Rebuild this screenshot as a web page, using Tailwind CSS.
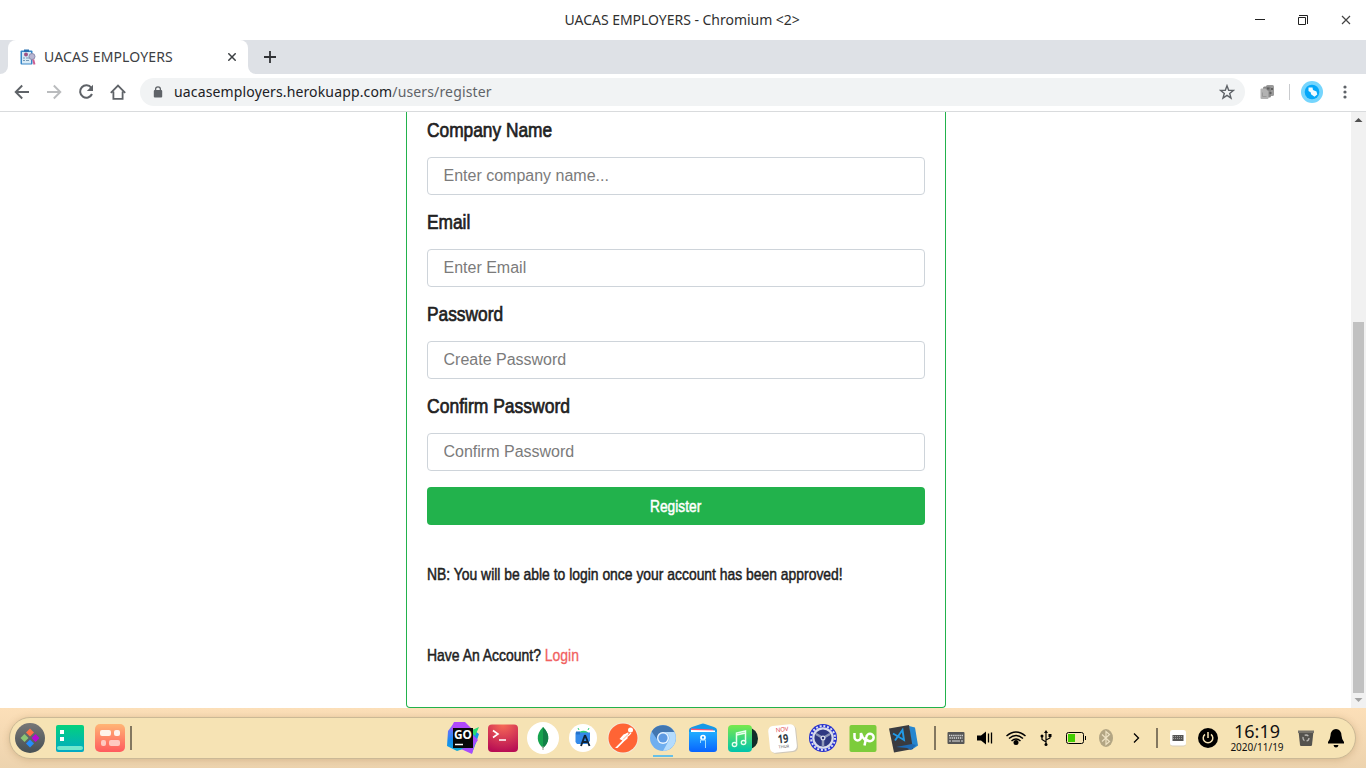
<!DOCTYPE html>
<html lang="en">
<head>
<meta charset="utf-8">
<title>UACAS EMPLOYERS</title>
<script src="https://cdn.jsdelivr.net/npm/@tailwindcss/browser@4"></script>
</head>
<body class="w-[1366px] h-[768px] overflow-hidden flex flex-col bg-white font-['Noto_Sans',sans-serif] text-[#202124]">

<!-- Window title bar -->
<header class="h-10 shrink-0 flex items-center pl-[564.5px]">
  <h1 class="flex-1 leading-10 text-[14px] tracking-[-0.03px] text-[#303030] whitespace-nowrap">UACAS EMPLOYERS - Chromium &lt;2&gt;</h1>
  <svg class="w-[43px] h-10" viewBox="0 0 43 40"><path d="M18 19.5h10" stroke="#222"/></svg>
  <svg class="w-[43px] h-10" viewBox="0 0 43 40" fill="none" stroke="#222"><path d="M18.500 17.500h7v7h-7zM19 15.500h8.500v8.500"/></svg>
  <svg class="w-[43px] h-10" viewBox="0 0 43 40"><path d="M19 16l8 8M27 16l-8 8" stroke="#444" stroke-width="1.2"/></svg>
</header>

<!-- Tab strip -->
<nav class="h-[34px] shrink-0 flex bg-[#dee1e6]">
  <div class="w-2 bg-white"><div class="h-full rounded-br-lg bg-[#dee1e6]"></div></div>
  <div class="w-[240px] flex items-center bg-white rounded-t-lg pl-3">
    <svg class="w-4 h-4 shrink-0" viewBox="0 0 16 16"><rect x=".5" y="1.500" width="12" height="14" rx="1" fill="#3987c8"/><rect x="2" y="3" width="9" height="11.500" fill="#d7eaf6"/><path d="M4 .5h5v2.300H4z" fill="#286eae"/><circle cx="6" cy="5.500" r="2" fill="#9e5384"/><path d="M3 9h2M3 11.500h2M6 9h3M6 11.500h3" stroke="#7699b6"/><circle cx="12" cy="7.500" r="3" fill="#b9b6d2" stroke="#8d8fae"/><path d="M13.200 10.500l1.300 5" stroke="#ce5f91" stroke-width="2"/></svg>
    <span class="ml-2 text-[14px] leading-5 tracking-[0.14px] text-[#3c4043] whitespace-nowrap">UACAS EMPLOYERS</span>
    <svg class="ml-auto mr-3 w-2 h-2" viewBox="0 0 8 8"><path d="M.3.3l7.400 7.400M7.700.3L.3 7.700" stroke="#3c4043" stroke-width="1.500"/></svg>
  </div>
  <div class="flex-1 bg-white"><div class="h-full rounded-bl-lg bg-[#dee1e6] flex items-center pl-4"><svg class="w-3 h-3" viewBox="0 0 12 12"><path d="M6 0v12M0 6h12" stroke="#303235" stroke-width="1.800"/></svg></div></div>
</nav>

<!-- Address toolbar -->
<section class="h-[38px] shrink-0 flex items-start pt-1 border-b border-[#d9dbdd] bg-white">
  <div class="h-7 flex items-center pl-[14px] gap-4 shrink-0">
    <svg class="w-4 h-4" viewBox="0 0 16 16" fill="none" stroke="#5f6368" stroke-width="1.9"><path d="M15 8H2M8.2 1.5L1.7 8l6.5 6.5"/></svg>
    <svg class="w-4 h-4" viewBox="0 0 16 16" fill="none" stroke="#babcbe" stroke-width="1.9"><path d="M1 8h13M7.8 1.5L14.3 8l-6.5 6.5"/></svg>
    <svg class="w-4 h-4" viewBox="0 0 16 16"><path d="M13.3 3.8A6.2 6.2 0 1 0 14 10" fill="none" stroke="#5f6368" stroke-width="2"/><path d="M15 .8V7H8.800z" fill="#5f6368"/></svg>
    <svg class="w-4 h-4" viewBox="0 0 16 16" fill="none" stroke="#5f6368" stroke-width="1.8"><path d="M.8 8.8L8 1.5l7.2 7.3M3.4 7.5v7.4h9.2V7.5"/></svg>
  </div>
  <div class="ml-[14px] w-[1105px] h-7 rounded-full bg-[#f1f3f4] flex items-center pl-[13px] pr-[10px] shrink-0">
    <svg class="w-[10px] h-3 shrink-0" viewBox="0 0 10 12"><rect x=".8" y="4" width="8.4" height="7.5" rx="1" fill="#5f6368"/><path d="M2.6 5V3.2a2.4 2.4 0 0 1 4.8 0V5" fill="none" stroke="#5f6368" stroke-width="1.3"/></svg>
    <span class="ml-[11px] text-[14px] leading-5 tracking-[0.145px] whitespace-nowrap">uacasemployers.herokuapp.com<span class="text-[#5f6368]">/users/register</span></span>
    <svg class="ml-auto w-4 h-4" viewBox="0 0 16 16"><path d="M8 1.7l1.7 4.5 4.8.2-3.8 3 1.3 4.7L8 11.4l-4 2.7 1.3-4.7-3.800-3 4.800-.2z" fill="none" stroke="#5f6368" stroke-width="1.4"/></svg>
  </div>
  <div class="h-7 flex items-center flex-1">
    <svg class="ml-[14px] w-4 h-4 shrink-0" viewBox="0 0 16 16"><rect x="7" y="1" width="8" height="11" rx="1.500" fill="#9a9a9a"/><rect x="4" y="2.500" width="8" height="11" rx="1.500" fill="#888"/><path d="M8 3.500h2.500v2H8zM12 4h2v2h-2zM10.500 8h2v2h-2z" fill="#606060"/><path d="M2.500 4.500h4l3 3V14q0 1-1 1h-6q-1 0-1-1V5.500q0-1 1-1z" fill="#b2b2b2"/><path d="M3.500 8.500v4h4" fill="none" stroke="#999"/></svg>
    <div class="ml-[14px] w-px h-4 bg-[#c9cbce]"></div>
    <svg class="ml-[11px] w-[22px] h-[22px] shrink-0" viewBox="0 0 22 22"><circle cx="11" cy="11" r="11" fill="#75d5fd"/><circle cx="11" cy="11" r="7.3" fill="#05a7f9"/><path d="M7.500 6.500h4l.5 2.500 3.500 1.500.8 3-2.800 2.200-3.500-2.500-.2-1.700L7.500 10z" fill="#f2fbff"/></svg>
    <svg class="ml-[19.5px] w-1 h-[14px]" viewBox="0 0 4 14" fill="#5f6368"><circle cx="2" cy="2" r="1.6"/><circle cx="2" cy="7" r="1.6"/><circle cx="2" cy="12" r="1.6"/></svg>
  </div>
</section>

<!-- Page -->
<main class="h-[596px] shrink-0 flex bg-white">
  <div class="w-[1351px] flex pl-[406px]">
    <form class="w-[540px] h-[596px] border border-t-0 border-[#22b24c] rounded-b px-5 flex flex-col font-['Liberation_Sans',Arial,sans-serif] text-[#212529]">
      <label class="h-[45px] pt-[3px] -ml-[0.5px]"><span class="inline-block origin-left scale-x-[.825] text-[21px] leading-[30px] whitespace-nowrap [-webkit-text-stroke:0.7px_#212121] text-[#212121]">Company Name</span></label>
      <input class="h-[38px] w-[498px] border border-[#ced4da] rounded pl-[15.5px] pr-4 text-[16px] placeholder:text-[#7b7b7b] placeholder:opacity-100" placeholder="Enter company name...">
      <label class="h-[54px] pt-[12px] -ml-[0.5px]"><span class="inline-block origin-left scale-x-[.825] text-[21px] leading-[30px] whitespace-nowrap [-webkit-text-stroke:0.7px_#212121] text-[#212121]">Email</span></label>
      <input class="h-[38px] w-[498px] border border-[#ced4da] rounded pl-[15.5px] pr-4 text-[16px] placeholder:text-[#7b7b7b] placeholder:opacity-100" placeholder="Enter Email">
      <label class="h-[54px] pt-[12px] -ml-[0.5px]"><span class="inline-block origin-left scale-x-[.825] text-[21px] leading-[30px] whitespace-nowrap [-webkit-text-stroke:0.7px_#212121] text-[#212121]">Password</span></label>
      <input class="h-[38px] w-[498px] border border-[#ced4da] rounded pl-[15.5px] pr-4 text-[16px] placeholder:text-[#7b7b7b] placeholder:opacity-100" placeholder="Create Password">
      <label class="h-[54px] pt-[12px] -ml-[0.5px]"><span class="inline-block origin-left scale-x-[.834] text-[21px] leading-[30px] whitespace-nowrap [-webkit-text-stroke:0.7px_#212121] text-[#212121]">Confirm Password</span></label>
      <input class="h-[38px] w-[498px] border border-[#ced4da] rounded pl-[15.5px] pr-4 text-[16px] placeholder:text-[#7b7b7b] placeholder:opacity-100" placeholder="Confirm Password">
      <button type="button" class="mt-4 h-[38px] w-[498px] shrink-0 rounded bg-[#22b24c] text-white text-[17px] pt-[2px]"><span class="inline-block scale-x-[.81] [-webkit-text-stroke:0.5px_#fff]">Register</span></button>
      <p class="mt-[38px] -ml-[0.5px] h-6 text-[17px] leading-6"><span class="inline-block origin-left scale-x-[.8175] whitespace-nowrap [-webkit-text-stroke:0.5px_#212121] text-[#212121]">NB: You will be able to login once your account has been approved!</span></p>
      <p class="mt-[57px] -ml-[0.5px] h-6 text-[17px] leading-6"><span class="inline-block origin-left scale-x-[.82] whitespace-nowrap [-webkit-text-stroke:0.5px_#212121] text-[#212121]">Have An Account? <a class="text-[#f1615f] [-webkit-text-stroke:0.3px_#f1615f]">Login</a></span></p>
    </form>
  </div>
  <aside class="w-[15px] bg-[#f1f1f1] flex flex-col items-center">
    <svg class="w-[15px] h-[15px]" viewBox="0 0 15 15"><path d="M3.5 10L7.5 6l4 4z" fill="#505050"/></svg>
    <div class="mt-[195px] w-[11px] h-[371px] bg-[#c1c1c1]"></div>
    <svg class="w-[15px] h-[15px]" viewBox="0 0 15 15"><path d="M3.5 5l4 4 4-4z" fill="#a3a3a3"/></svg>
  </aside>
</main>

<!-- Desktop dock -->
<footer class="flex-1 bg-linear-to-b from-[#fcdfb8] to-[#edd3ae] pt-[9px] px-[10px]">
  <div class="w-[1347px] h-[42px] rounded-full bg-[#f6e3b4] border border-[#cbb996] shadow-[0_1px_7px_rgba(150,110,60,.3)] flex items-center -ml-px">
    <svg class="w-10 h-10 shrink-0" viewBox="0 0 40 40"><defs><linearGradient id="lg" x2="0" y2="1"><stop stop-color="#777"/><stop offset="1" stop-color="#465054"/></linearGradient></defs><circle cx="20" cy="20" r="15" fill="url(#lg)"/><path d="M20 10.500l4 4-4 4-4-4z" fill="#ff7046"/><path d="M14.500 16l4 4-4 4-4-4z" fill="#8bc574"/><path d="M25.500 16l4 4-4 4-4-4z" fill="#b80bd2"/><path d="M20 21.500l4 4-4 4-4-4z" fill="#268cfa"/></svg>
    <svg class="w-10 h-10 shrink-0" viewBox="0 0 40 40"><defs><linearGradient id="gr" x2="0" y2="1"><stop stop-color="#03d27d"/><stop offset="1" stop-color="#02a9c5"/></linearGradient></defs><rect x="6" y="7" width="28" height="27" rx="2" fill="url(#gr)"/><path d="M10 12h4v4h-4zM10 19h4v4h-4z" fill="#fff"/><rect x="7" y="28" width="26" height="4" rx="2" fill="#72e7cd"/></svg>
    <svg class="w-10 h-10 shrink-0" viewBox="0 0 40 40"><defs><linearGradient id="or" x2="0" y2="1"><stop stop-color="#ffb575"/><stop offset="1" stop-color="#ff5b5e"/></linearGradient></defs><rect x="5" y="6" width="30" height="28" rx="5" fill="url(#or)"/><rect x="10" y="12" width="11" height="6" rx="2" fill="#fff3ea"/><rect x="24" y="12" width="6" height="6" rx="2" fill="#fff3ea"/><rect x="11" y="22" width="5" height="6" rx="2" fill="#ffc9c1"/><rect x="19" y="22" width="11" height="6" rx="2" fill="#ffc9c1"/></svg>
    <div class="w-[2px] h-6 bg-[#83775f] shrink-0"></div>
    <div class="ml-[311px] flex shrink-0">
      <svg class="w-10 h-10" viewBox="0 0 40 40"><defs><linearGradient id="go" x1=".2" x2=".5" y2="1"><stop offset=".1" stop-color="#7d6cff"/><stop offset=".5" stop-color="#168bf0"/><stop offset="1" stop-color="#10b7d0"/></linearGradient></defs><path d="M5 13l6-8 17 5 8 6-3 9-4 10-9-4-6 2-10-5z" fill="url(#go)"/><path d="M11 4h11l7 7-18 3-3-3z" fill="#b048fb"/><path d="M27 13l9-4-4 9z" fill="#26dc73"/><path d="M29 16l6 6-3 4-3 10-11-5 11-3z" fill="#a74cfd"/><rect x="10" y="10" width="20" height="20" fill="#080808"/><path d="M12 26.500h8" stroke="#fff" stroke-width="1.500"/><text x="11" y="20.500" font-family="Noto Sans" font-weight="bold" font-size="11.500" textLength="18" lengthAdjust="spacingAndGlyphs" fill="#fff">GO</text></svg>
      <svg class="w-10 h-10" viewBox="0 0 40 40"><defs><radialGradient id="te" cx=".5" cy="0" r="1"><stop stop-color="#f76b56"/><stop offset="1" stop-color="#b80e54"/></radialGradient></defs><rect x="5" y="6.500" width="30" height="27.500" rx="4" fill="url(#te)"/><path d="M10 12.500l5 3.500-5 3.500M16 22h7" fill="none" stroke="#fff" stroke-width="1.600"/></svg>
      <svg class="w-10 h-10" viewBox="0 0 40 40"><circle cx="20" cy="20" r="16" fill="#fff"/><path d="M20 9c8 8 6 16 0 21-6-5-8-13 0-21z" fill="#16a34e"/><path d="M20 9c8 8 6 16 0 21z" fill="#128047"/><path d="M20 28v4" stroke="#9b9c90"/></svg>
      <svg class="w-10 h-10" viewBox="0 0 40 40"><circle cx="20" cy="20" r="14" fill="#fff"/><path d="M15 16a6 5.500 0 0 1 11 0z" fill="#30cf74"/><path d="M16 12l-1-2M25 12l1-2" stroke="#30cf74"/><path d="M12.500 14.500h14.500V23l-3 3h-10l-1.500-2z" fill="#348ae9"/><path d="M22 17l-4 11M22 17l4.500 11M19 24h6" stroke="#102438" stroke-width="1.900"/><path d="M13 13.500h4v3h-4z" fill="#2472cc"/></svg>
      <svg class="w-10 h-10" viewBox="0 0 40 40"><circle cx="20" cy="20" r="15.500" fill="#f4ead8"/><circle cx="20" cy="20" r="14.500" fill="#ff6435"/><circle cx="27.500" cy="12" r="2.500" fill="#fff"/><path d="M25.500 14.500l-5 2-4 4.500 3 1.500-7.500 7.500h2.500l7-7 3-2.500z" fill="#fff"/><path d="M25 15l-7 6M28 15l-3 3" stroke="#fff" stroke-width="1.200"/><path d="M25 16.500l-5 5" stroke="#ff8258" stroke-width=".7"/></svg>
      <div class="relative w-10 h-10"><svg class="w-10 h-10" viewBox="0 0 40 40"><circle cx="20" cy="20" r="13" fill="#70aff0"/><path d="M8.700 13.500A13 13 0 0 1 31.300 14H20a6 6 0 0 0-5.500 8z" fill="#4276b0"/><path d="M31.300 14A13 13 0 0 1 20 33l5.500-10A6 6 0 0 0 20 14z" fill="#b5dcfd"/><circle cx="20" cy="20" r="6" fill="#e8f4ff"/><circle cx="20" cy="20" r="4.600" fill="#5d9ae3"/></svg><div class="absolute left-[10px] top-[37px] w-5 h-[2px] bg-[#67c0e7]"></div></div>
      <svg class="w-10 h-10" viewBox="0 0 40 40"><defs><linearGradient id="st" x2="0" y2="1"><stop stop-color="#20adff"/><stop offset="1" stop-color="#0864ff"/></linearGradient></defs><path d="M6 12q0-2 3-3l9-3q2-1 4 0l9 3q3 1 3 3v4H6z" fill="#1699e8"/><path d="M8 10.500l22 1v3H8z" fill="#ff5176"/><path d="M8 12l24 .5V15H8z" fill="#fff"/><path d="M6 14h28v17q0 3-3 3H9q-3 0-3-3z" fill="url(#st)"/><circle cx="20" cy="19.500" r="2" fill="none" stroke="#fff" stroke-width="1.700"/><path d="M17.500 25v-3M22.500 30v-8h-5" fill="none" stroke="#9bdaff"/></svg>
      <svg class="w-10 h-10" viewBox="0 0 40 40"><defs><linearGradient id="mu" x2="0" y2="1"><stop stop-color="#78e94c"/><stop offset="1" stop-color="#00c4ad"/></linearGradient></defs><path d="M26 10a9 10.500 0 0 1 0 21z" fill="#122d2a"/><rect x="5" y="7" width="24" height="27" rx="4" fill="url(#mu)"/><path d="M13.500 26.500V15l9-2v11.500M13.500 17l9-2" fill="none" stroke="#e8ffee" stroke-width="1.500"/><ellipse cx="11.500" cy="26.500" rx="2.200" ry="2" fill="none" stroke="#e8ffee" stroke-width="1.300"/><ellipse cx="20.500" cy="24.500" rx="2.200" ry="2" fill="none" stroke="#e8ffee" stroke-width="1.300"/></svg>
      <svg class="w-10 h-10" viewBox="0 0 40 40"><g transform="rotate(-6 20 20)" font-family="Noto Sans" text-anchor="middle"><rect x="7" y="8" width="27" height="27" rx="5" fill="#cfc8ba"/><rect x="6" y="7" width="27" height="27" rx="5" fill="#fff"/><text x="20" y="13.500" font-size="6" fill="#e04848">NOV</text><text x="20" y="25" font-size="12" font-weight="bold" textLength="10.500" lengthAdjust="spacingAndGlyphs" fill="#2e3940">19</text><text x="20" y="30" font-size="4" fill="#555">THUR</text></g></svg>
      <svg class="w-10 h-10" viewBox="0 0 40 40"><circle cx="20" cy="20" r="14" fill="#2630cf"/><circle cx="20" cy="20" r="12" fill="none" stroke="#dce0ef" stroke-width="2" stroke-dasharray="2 1.770"/><circle cx="20" cy="20" r="9.700" fill="#303981" stroke="#d9dceb" stroke-width="2.200"/><path d="M20 20v8M20 20l-7-4M20 20l7-4" stroke="#8f98b8" stroke-width="2.500"/><circle cx="20" cy="20" r="2.500" fill="#d9dceb"/><circle cx="20" cy="20" r="1.200" fill="#293274"/></svg>
      <svg class="w-10 h-10" viewBox="0 0 40 40"><rect x="6.500" y="7" width="27" height="27" rx="2" fill="#7ccc3c"/><path d="M11.500 15v4.200a3.200 3.200 0 0 0 6.400 0V15q1.500 5 4.600 7.500M21.500 27.500l1.800-8.500a3.700 3.700 0 1 1 3.700 4.200q-3 0-5.500-3.700" fill="none" stroke="#fff" stroke-width="2.500"/></svg>
      <svg class="w-10 h-10" viewBox="0 0 40 40"><path d="M26 8l6 1.500 3 18-6 4z" fill="#2686cf"/><path d="M6 10.500l20-3.500 4 24-19 3.500z" fill="#393b40"/><path d="M10 15.500l11 6.500-1.500-10-7.500 10.500" fill="none" stroke="#219be8" stroke-width="1.900"/><path d="M13 29l16-3 4 1-5 5-4-2z" fill="#1f69b2"/></svg>
    </div>
    <div class="ml-[11px] w-[2px] h-6 bg-[#83775f] shrink-0"></div>
    <div class="ml-[5px] flex shrink-0">
      <svg class="w-[30px] h-10" viewBox="0 0 30 40"><rect x="6.500" y="14" width="17" height="12" rx="1" fill="#565656"/><path d="M8 17.500h14M8.500 20h13" stroke="#ddd" stroke-width="1.300" stroke-dasharray="1.300 .8"/><path d="M8 23h2M11 23h8M20 23h2" stroke="#ddd" stroke-width="1.200"/></svg>
      <svg class="w-[30px] h-10" viewBox="0 0 30 40"><path d="M6 17.500h4l5-4v13l-5-4H6z"/><path d="M17.500 15.500v9M20.500 14.500v11" stroke="#000" stroke-width="1.300"/></svg>
      <svg class="w-[30px] h-10" viewBox="0 0 30 40" fill="none" stroke="#000" stroke-width="1.500"><path d="M5.500 18q9.500-8 19 0M8 20.500q7-6 14 0M10.500 23q4.500-4 9 0"/><circle cx="15" cy="24.500" r="2.500" fill="#000" stroke="none"/></svg>
      <svg class="w-[30px] h-10" viewBox="0 0 30 40"><path d="M15 14v12M15 24l-4-2.500V18M15 22l4-2v-3" fill="none" stroke="#000" stroke-width="1.200"/><path d="M15 12l2 3h-4zM17.500 16h3v3h-3z"/><circle cx="11" cy="18" r="1.500"/><circle cx="15" cy="26.500" r="1.500"/></svg>
      <svg class="w-[30px] h-10" viewBox="0 0 30 40"><rect x="5.500" y="14.500" width="17" height="11" rx="2" fill="none" stroke="#000"/><rect x="7" y="16" width="7" height="8" fill="#42cd00"/><path d="M24.500 18v4" stroke="#000"/></svg>
      <svg class="w-[30px] h-10" viewBox="0 0 30 40"><ellipse cx="15" cy="20" rx="7" ry="9" fill="#b2a583"/><path d="M11 16.500l7.500 7-3.500 3V13.500l3.500 3-7.500 7" fill="none" stroke="#eee2c4" stroke-width="1.200"/></svg>
      <svg class="w-[30px] h-10" viewBox="0 0 30 40"><path d="M13 15.500l4.500 4.500-4.500 4.500" fill="none" stroke="#000" stroke-width="1.300"/></svg>
    </div>
    <div class="ml-[5px] w-[2px] h-5 bg-[#83775f] shrink-0"></div>
    <div class="ml-[5px] flex shrink-0">
      <svg class="w-[30px] h-10" viewBox="0 0 30 40"><rect x="7" y="12.500" width="16" height="16" rx="3" fill="#d7cdb9"/><rect x="7" y="12" width="16" height="15.500" rx="2.500" fill="#fff"/><rect x="9.500" y="17" width="11" height="6" fill="#555"/><path d="M10 18.500h10M10 20.500h10" stroke="#aaa" stroke-width=".8" stroke-dasharray="1 1"/></svg>
      <svg class="w-[30px] h-10" viewBox="0 0 30 40"><circle cx="15" cy="20" r="10"/><path d="M12 16.300a4.800 4.800 0 1 0 6 0M15 14v6" fill="none" stroke="#f6e3b4" stroke-width="1.500"/></svg>
      <div class="w-[68px] h-10 flex flex-col items-center text-[#111]"><time class="mt-[4px] h-[19px] leading-[19px] text-[18px]">16:19</time><time class="h-3 leading-3 text-[10px]">2020/11/19</time></div>
      <svg class="w-[30px] h-10" viewBox="0 0 30 40"><path d="M7.500 13h15l-1.500 14q-.2 1-1 1H10q-.8 0-1-1z" fill="#55534e"/><path d="M7 12.500h16v2.500H7z" fill="#77736a"/><circle cx="15" cy="20" r="3" fill="none" stroke="#b9b7b2" stroke-width="1.300" stroke-dasharray="4 2.200"/></svg>
      <svg class="w-[30px] h-10" viewBox="0 0 30 40"><path d="M15 11q5 0 5.500 6.500.3 4 2.500 6.500v1.500H7V24q2.200-2.500 2.500-6.500Q10 11 15 11zM12.500 27h5q-.5 2.500-2.500 2.500T12.500 27z"/></svg>
    </div>
  </div>
</footer>
</body>
</html>
